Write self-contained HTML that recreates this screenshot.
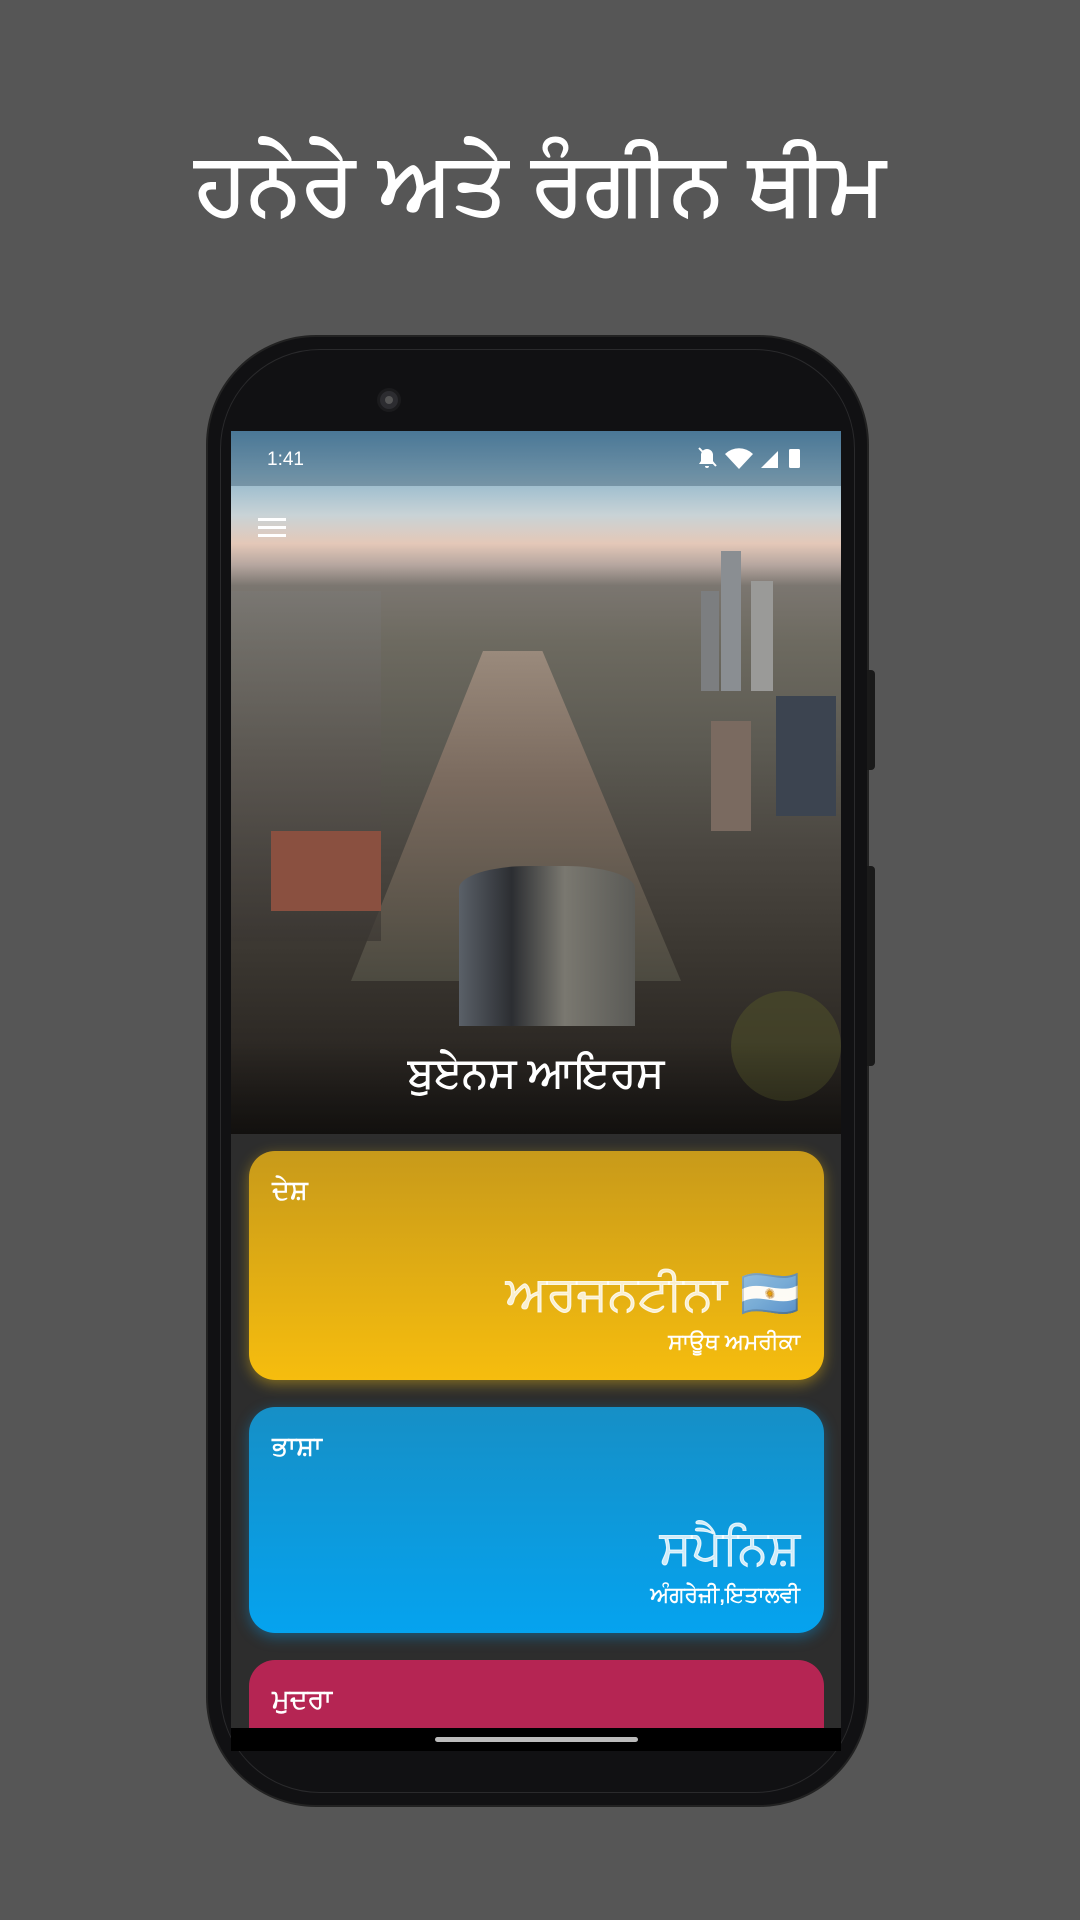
<!DOCTYPE html>
<html><head><meta charset="utf-8"><style>
*{margin:0;padding:0;box-sizing:border-box}
body{width:1080px;height:1920px;background:#565656;position:relative;overflow:hidden;font-family:"Liberation Sans","Noto Sans CJK SC",sans-serif;color:#fff}
.title{position:absolute;top:135px;left:0;width:1080px;text-align:center;font-size:86px;font-weight:400;-webkit-text-stroke:2px #fff}
.phone{position:absolute;left:206px;top:335px;width:663px;height:1472px;background:#111113;border-radius:110px;border:2px solid #222}
.phone:before{content:"";position:absolute;left:12px;top:12px;right:12px;bottom:12px;border-radius:100px;border:1px solid #2a2a2c}
.btn{position:absolute;left:867px;width:8px;background:#1a1a1a;border-radius:0 4px 4px 0}
.cam{position:absolute;left:377px;top:388px;width:24px;height:24px;border-radius:50%;background:#2c2c30;border:3px solid #1b1b1d}
.cam:after{content:"";position:absolute;left:5px;top:5px;width:8px;height:8px;border-radius:50%;background:#555}
.screen{position:absolute;left:231px;top:431px;width:610px;height:1320px;background:#2d2d2d;overflow:hidden}
.hero{position:absolute;left:0;top:0;width:610px;height:703px;background:
linear-gradient(180deg,#5d93b8 0%,#8fb6cc 6%,#c9d3d6 12%,#e4c8b8 16%,#b7a7a0 19%,#7b7670 22%,#6d6a60 30%,#5c5a52 45%,#4a4640 60%,#3a3630 75%,#2a2622 90%,#1e1b18 100%)}
.water{position:absolute;left:120px;top:220px;width:330px;height:330px;background:linear-gradient(180deg,#9a8a7c,#7a6a5e 40%,#4c4a40);clip-path:polygon(40% 0,58% 0,100% 100%,0 100%)}
.bldg{position:absolute;background:#5a5e62}
.status{position:absolute;top:0;left:0;width:610px;height:55px;background:rgba(40,70,90,.35);font-size:19px}
.card{position:absolute;left:18px;width:575px;border-radius:26px}
.lbl{position:absolute;left:23px;font-size:27px;-webkit-text-stroke:.6px #fff}
.big{position:absolute;right:24px;font-size:48px;color:rgba(255,255,255,.8);-webkit-text-stroke:1px rgba(255,255,255,.8)}
.sub{position:absolute;right:24px;font-size:22px;-webkit-text-stroke:.5px #fff}
</style></head><body>
<div class="title">ਹਨੇਰੇ ਅਤੇ ਰੰਗੀਨ ਥੀਮ</div>
<div class="phone"></div>
<div class="btn" style="top:670px;height:100px"></div>
<div class="btn" style="top:866px;height:200px"></div>
<div class="cam"></div>
<div class="screen">
 <div class="hero">
  <div class="water"></div>
  <div class="bldg" style="left:0;top:160px;width:150px;height:350px;background:linear-gradient(180deg,#7a7874,#5a5550 50%,#3a3632);opacity:.7"></div>
  <div class="bldg" style="left:490px;top:120px;width:20px;height:140px;background:#8a8e92"></div>
  <div class="bldg" style="left:520px;top:150px;width:22px;height:110px;background:#9a9a98"></div>
  <div class="bldg" style="left:470px;top:160px;width:18px;height:100px;background:#7c7e80"></div>
  <div class="bldg" style="left:545px;top:265px;width:60px;height:120px;background:#3c4450"></div>
  <div class="bldg" style="left:480px;top:290px;width:40px;height:110px;background:#7a6a60"></div>
  <div class="bldg" style="left:228px;top:435px;width:176px;height:160px;border-radius:40% 40% 0 0/14% 14% 0 0;background:linear-gradient(90deg,#5a6068,#2c2e32 30%,#7a7870 60%,#5a5a56)"></div>
  <div class="bldg" style="left:40px;top:400px;width:110px;height:80px;background:#8a5040"></div>
  <div class="bldg" style="left:500px;top:560px;width:110px;height:110px;border-radius:50%;background:#4a4a2a;opacity:.7"></div>
  <div style="position:absolute;left:0;top:610px;width:610px;height:93px;background:linear-gradient(180deg,rgba(0,0,0,0),rgba(0,0,0,.4))"></div>
  <div style="position:absolute;left:0;top:618px;width:610px;text-align:center;font-size:42px;-webkit-text-stroke:1px #fff">ਬੁਏਨਸ ਆਇਰਸ</div>
  <div style="position:absolute;left:27px;top:87px;width:28px;height:3px;background:#fff;box-shadow:0 8px 0 #fff,0 16px 0 #fff"></div>
 </div>
 <div class="status"><span style="position:absolute;left:36px;top:18px">1:41</span>
  <svg style="position:absolute;left:466px;top:14px" width="130" height="26" viewBox="0 0 130 26" fill="#fff">
   <path d="M10 4a6 6 0 0 0-6 6v6l-2 3h16l-2-3v-6a6 6 0 0 0-6-6zM8 21h4a2 2 0 0 1-4 0z"/><path d="M2 3l17 18" stroke="#fff" stroke-width="2"/>
   <path d="M28 9a20 20 0 0 1 28 0l-14 15z"/><path d="M64 23l17-17v17z"/><rect x="92" y="4" width="11" height="19" rx="1.5"/>
  </svg></div>
 <div class="card" style="top:720px;height:229px;background:linear-gradient(180deg,#c89a1a,#f6bd0e);box-shadow:0 4px 14px rgba(240,190,20,.45)">
  <div class="lbl" style="top:24px">ਦੇਸ਼</div>
  <div class="big" style="top:114px">ਅਰਜਨਟੀਨਾ 🇦🇷</div>
  <div class="sub" style="top:178px">ਸਾਊਥ ਅਮਰੀਕਾ</div>
 </div>
 <div class="card" style="top:976px;height:226px;background:linear-gradient(180deg,#168fc6,#05a3ef);box-shadow:0 4px 14px rgba(10,160,240,.4)">
  <div class="lbl" style="top:24px">ਭਾਸ਼ਾ</div>
  <div class="big" style="top:114px">ਸਪੈਨਿਸ਼</div>
  <div class="sub" style="top:175px">ਅੰਗਰੇਜ਼ੀ,ਇਤਾਲਵੀ</div>
 </div>
 <div class="card" style="top:1229px;height:200px;background:#b52553">
  <div class="lbl" style="top:24px">ਮੁਦਰਾ</div>
 </div>
 <div style="position:absolute;left:0;top:1297px;width:610px;height:23px;background:#000"></div>
 <div style="position:absolute;left:204px;top:1306px;width:203px;height:5px;border-radius:3px;background:#bbb"></div>
</div>
</body></html>
